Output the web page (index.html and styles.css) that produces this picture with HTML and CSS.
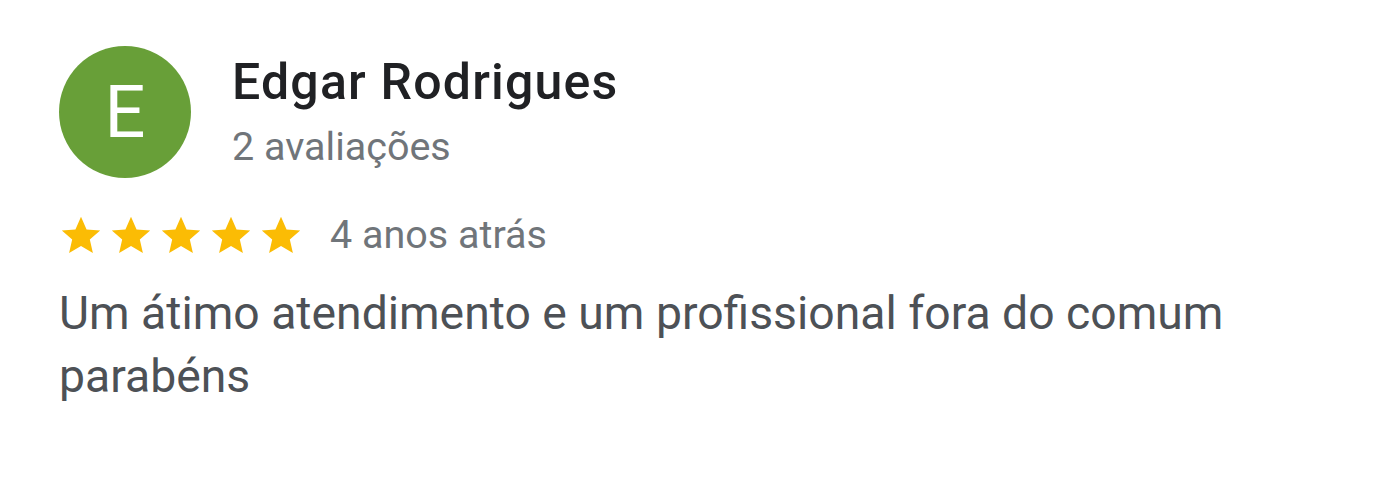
FILE: index.html
```html
<!DOCTYPE html>
<html lang="pt">
<head>
  <meta charset="UTF-8">
  <title>Avaliação</title>
  <link rel="stylesheet" href="styles.css">
</head>
<body>
  <div class="review">
    <div class="review-head">
      <div class="avatar">E</div>
      <div class="author">
        <div class="author-name">Edgar Rodrigues</div>
        <div class="author-meta">2 avaliações</div>
      </div>
    </div>
    <div class="review-rating">
      <div class="stars">
        <svg class="star" viewBox="0 0 24 24"><path d="M12 2.5l2.9 6.6 7.1.6-5.4 4.7 1.6 7-6.2-3.7-6.2 3.7 1.6-7L2 9.7l7.1-.6z"/></svg>
        <svg class="star" viewBox="0 0 24 24"><path d="M12 2.5l2.9 6.6 7.1.6-5.4 4.7 1.6 7-6.2-3.7-6.2 3.7 1.6-7L2 9.7l7.1-.6z"/></svg>
        <svg class="star" viewBox="0 0 24 24"><path d="M12 2.5l2.9 6.6 7.1.6-5.4 4.7 1.6 7-6.2-3.7-6.2 3.7 1.6-7L2 9.7l7.1-.6z"/></svg>
        <svg class="star" viewBox="0 0 24 24"><path d="M12 2.5l2.9 6.6 7.1.6-5.4 4.7 1.6 7-6.2-3.7-6.2 3.7 1.6-7L2 9.7l7.1-.6z"/></svg>
        <svg class="star" viewBox="0 0 24 24"><path d="M12 2.5l2.9 6.6 7.1.6-5.4 4.7 1.6 7-6.2-3.7-6.2 3.7 1.6-7L2 9.7l7.1-.6z"/></svg>
      </div>
      <span class="review-date">4 anos atrás</span>
    </div>
    <p class="review-text">Um átimo atendimento e um profissional fora do comum parabéns</p>
  </div>
</body>
</html>
```

FILE: styles.css
```css
* {
  margin: 0;
  padding: 0;
  box-sizing: border-box;
}
body {
  font-family: Roboto, "Noto Sans", sans-serif;
  background: #fff;
}
.review {
  padding: 46px 0 0 59px;
  width: 1300px;
}
.review-head {
  display: flex;
  align-items: flex-start;
  gap: 41px;
}
.avatar {
  width: 132px;
  height: 132px;
  border-radius: 50%;
  background: #689f38;
  color: #fff;
  font-size: 72px;
  display: flex;
  align-items: center;
  justify-content: center;
  flex-shrink: 0;
}
.author-name {
  font-size: 50px;
  font-weight: 500;
  letter-spacing: 1.2px;
  color: #202124;
  line-height: 72px;
}
.author-meta {
  margin-top: 4px;
  font-size: 39.5px;
  color: #70757a;
  line-height: 50px;
}
.review-rating {
  display: flex;
  align-items: center;
  margin: 33px 0 0 -1px;
}
.stars {
  display: flex;
  gap: 4px;
}
.star {
  width: 46px;
  height: 46px;
  fill: #fbbc04;
}
.review-date {
  margin-left: 26px;
  font-size: 39.5px;
  color: #70757a;
}
.review-text {
  margin-top: 24px;
  font-size: 46.3px;
  line-height: 63px;
  color: #4d5156;
}
```
